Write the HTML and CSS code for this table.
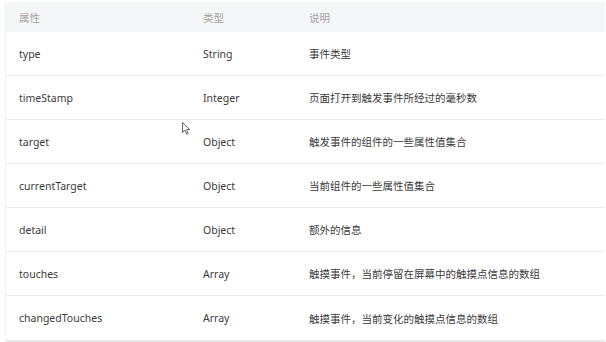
FILE: index.html
```html
<!DOCTYPE html>
<html lang="zh-CN">
<head>
    <meta charset="UTF-8">
    <meta name="viewport" content="width=device-width, initial-scale=1.0">
    <link rel="stylesheet" href="styles.css">
</head>
<body>
    <div class="table">
        <div class="row head">
            <div class="cell">属性</div>
            <div class="cell">类型</div>
            <div class="cell">说明</div>
        </div>
        <div class="row">
            <div class="cell">type</div>
            <div class="cell">String</div>
            <div class="cell">事件类型</div>
        </div>
        <div class="row">
            <div class="cell">timeStamp</div>
            <div class="cell">Integer</div>
            <div class="cell">页面打开到触发事件所经过的毫秒数</div>
        </div>
        <div class="row">
            <div class="cell">target</div>
            <div class="cell">Object</div>
            <div class="cell">触发事件的组件的一些属性值集合</div>
        </div>
        <div class="row">
            <div class="cell">currentTarget</div>
            <div class="cell">Object</div>
            <div class="cell">当前组件的一些属性值集合</div>
        </div>
        <div class="row">
            <div class="cell">detail</div>
            <div class="cell">Object</div>
            <div class="cell">额外的信息</div>
        </div>
        <div class="row">
            <div class="cell">touches</div>
            <div class="cell">Array</div>
            <div class="cell">触摸事件，当前停留在屏幕中的触摸点信息的数组</div>
        </div>
        <div class="row">
            <div class="cell">changedTouches</div>
            <div class="cell">Array</div>
            <div class="cell">触摸事件，当前变化的触摸点信息的数组</div>
        </div>
    </div>

    <!-- mouse pointer captured in the screenshot -->
    <svg class="cursor" width="9" height="13" viewBox="0 0 9 13">
        <path d="M0.5 0.5 L0.5 10.5 L3 8.2 L4.8 12.2 L6.2 11.6 L4.5 7.6 L7.8 7.6 Z" fill="#fff" stroke="#555" stroke-width="0.9" stroke-linejoin="round"/>
    </svg>
</body>
</html>
```

FILE: styles.css
```css
:root {
    --text: #3b3b3b;
    --muted: #a3a3a3;
    --head-bg: #f5f6f7;
    --line: #ececec;
}

* {
    margin: 0;
    padding: 0;
    box-sizing: border-box;
}

body {
    width: 606px;
    height: 342px;
    overflow: hidden;
    background: #fff;
    font-family: "Noto Sans", "Noto Sans CJK SC", sans-serif;
    font-size: 10.5px;
    color: var(--text);
    padding: 2px 1px 0 5px;
    position: relative;
}

.table {
    border-left: 1px solid #f2f2f2;
    border-bottom: 3px solid #e9e9e9;
}

.row {
    display: grid;
    grid-template-columns: 184px 106px 1fr;
    height: 44px;
    align-items: center;
    border-bottom: 1px solid var(--line);
}

.row .cell {
    padding-left: 13px;
    white-space: nowrap;
}

.row.head {
    height: 30px;
    background: var(--head-bg);
    color: var(--muted);
    border-bottom: none;
}

.row:last-child {
    border-bottom: none;
}

.cursor {
    position: absolute;
    left: 182px;
    top: 122px;
}
```
